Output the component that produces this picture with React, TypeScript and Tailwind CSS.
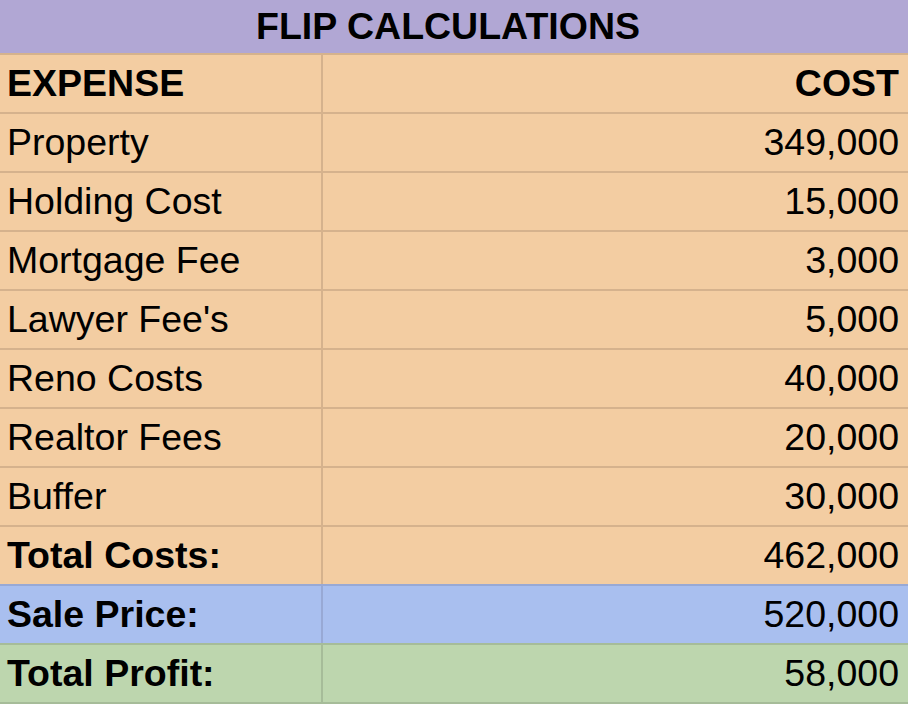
const rows = [
  { label: "EXPENSE", value: "COST", bold: true, tone: "orange" },
  { label: "Property", value: "349,000", tone: "orange" },
  { label: "Holding Cost", value: "15,000", tone: "orange" },
  { label: "Mortgage Fee", value: "3,000", tone: "orange" },
  { label: "Lawyer Fee's", value: "5,000", tone: "orange" },
  { label: "Reno Costs", value: "40,000", tone: "orange" },
  { label: "Realtor Fees", value: "20,000", tone: "orange" },
  { label: "Buffer", value: "30,000", tone: "orange" },
  { label: "Total Costs:", value: "462,000", boldLabel: true, tone: "orange" },
  { label: "Sale Price:", value: "520,000", boldLabel: true, tone: "blue" },
  { label: "Total Profit:", value: "58,000", boldLabel: true, tone: "green" },
];

const tones: Record<string, string> = {
  orange: "bg-[#f3cda2] border-[#d5b28d]",
  blue: "bg-[#a9bfef] border-[#98a9d5]",
  green: "bg-[#bdd6ae] border-[#a6bc99]",
};

export default function App() {
  return (
    <div className="w-[908px] h-[704px] overflow-hidden bg-white font-['Liberation_Sans',Arial,sans-serif] text-[37.5px] text-black">
      <div className="flex h-[53px] items-center justify-center bg-[#b1a7d4] pr-[12px] font-bold">
        FLIP CALCULATIONS
      </div>
      {rows.map((r, i) => (
        <div
          key={r.label}
          className={`flex h-[59px] border-t-2 ${tones[r.tone]} ${i === rows.length - 1 ? "h-[61px] border-b-2" : ""}`}
        >
          <div
            className={`flex w-[323px] shrink-0 items-center border-r-2 pl-[7px] ${tones[r.tone]} ${r.bold || r.boldLabel ? "font-bold" : ""}`}
          >
            {r.label}
          </div>
          <div className={`flex flex-1 items-center justify-end pr-[9px] ${r.bold ? "font-bold" : ""}`}>
            {r.value}
          </div>
        </div>
      ))}
    </div>
  );
}
